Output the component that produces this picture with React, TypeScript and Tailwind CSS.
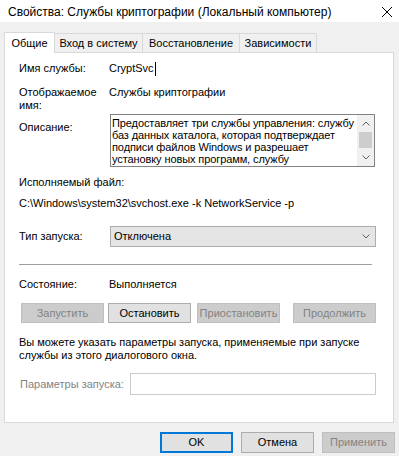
const TABS = ["Вход в систему", "Восстановление", "Зависимости"];
const TAB_W = ["w-[89px]", "w-[98px]", "w-[78px]"];

function Chevron({ up = false, className = "" }: { up?: boolean; className?: string }) {
  return (
    <svg viewBox="0 0 8 5" className={className} aria-hidden="true">
      <path
        d={up ? "M0.5 4.5L4 1L7.5 4.5" : "M0.5 0.5L4 4L7.5 0.5"}
        fill="none"
        stroke="currentColor"
        strokeWidth="1"
      />
    </svg>
  );
}

export default function App() {
  return (
    <div className="flex h-[456px] w-[399px] flex-col overflow-hidden bg-[#f0f0f0] font-['Liberation_Sans',Arial,sans-serif] text-[11px] text-black">
      {/* Заголовок окна */}
      <div className="flex h-[22px] items-center justify-between bg-white pl-[8px] pr-[7px] pt-[2px] text-[12px]">
        <span className="leading-[15px]">Свойства: Службы криптографии (Локальный компьютер)</span>
        <svg viewBox="0 0 10 10" className="h-[10px] w-[10px] text-black" aria-hidden="true">
          <path d="M0 0L10 10M10 0L0 10" stroke="currentColor" strokeWidth="1" />
        </svg>
      </div>

      {/* Вкладки */}
      <div className="mt-[10px] flex h-[20px] items-start pl-[4px]">
        <div className="relative z-10 flex h-[21px] w-[51px] items-center justify-center border border-b-0 border-[#d9d9d9] bg-white">
          Общие
        </div>
        {TABS.map((t, i) => (
          <div
            key={t}
            className={[
              "-ml-[1px] mt-[1px] flex h-[19px] items-center justify-center border border-b-0 border-[#d9d9d9] bg-[#f0f0f0]",
              TAB_W[i],
            ].join(" ")}
          >
            {t}
          </div>
        ))}
      </div>

      {/* Панель */}
      <div className="ml-[4px] flex h-[371px] w-[390px] flex-col border border-[#d9d9d9] bg-white pl-[14px]">
        <div className="mt-[8px] flex h-[15px] items-center leading-[15px]">
          <span className="w-[90px]">Имя службы:</span>
          <span>CryptSvc</span>
          <span className="ml-[1px] h-[14px] w-px bg-black" />
        </div>

        <div className="mt-[10px] flex leading-[13px]">
          <span className="w-[90px]">
            Отображаемое
            <br />
            имя:
          </span>
          <span>Службы криптографии</span>
        </div>

        <div className="mt-[2px] flex items-start">
          <span className="w-[91px] pt-[6px] leading-[15px]">Описание:</span>
          <div className="flex h-[53px] w-[265px] border border-[#828282]">
            <div className="flex-1 overflow-hidden whitespace-nowrap pl-[1px] pt-[2px] leading-[12px] tracking-[-0.1px]">
              <div>Предоставляет три службы управления: службу</div>
              <div>баз данных каталога, которая подтверждает</div>
              <div>подписи файлов Windows и разрешает</div>
              <div>установку новых программ, службу</div>
            </div>
            <div className="flex w-[17px] flex-col bg-[#f0f0f0] text-[#606060]">
              <div className="flex h-[17px] items-center justify-center">
                <Chevron up className="h-[5px] w-[8px]" />
              </div>
              <div className="mx-[2px] h-[16px] bg-[#cdcdcd]" />
              <div className="flex flex-1 items-center justify-center">
                <Chevron className="h-[5px] w-[8px]" />
              </div>
            </div>
          </div>
        </div>

        <div className="mt-[8px] leading-[15px]">Исполняемый файл:</div>
        <div className="mt-[6px] leading-[15px]">C:\Windows\system32\svchost.exe -k NetworkService -p</div>

        <div className="mt-[15px] flex h-[21px] items-center">
          <span className="w-[91px]">Тип запуска:</span>
          <div className="flex h-[21px] w-[266px] items-center justify-between border border-[#adadad] bg-[#e5e5e5] pl-[3px] pr-[5px]">
            <span>Отключена</span>
            <Chevron className="h-[5px] w-[8px] text-[#606060]" />
          </div>
        </div>

        <div className="mt-[17px] h-px w-[353px] bg-[#a0a0a0]" />

        <div className="mt-[12px] flex leading-[15px]">
          <span className="w-[90px]">Состояние:</span>
          <span>Выполняется</span>
        </div>

        <div className="mt-[11px] flex pl-[2px]">
          <button className="flex h-[20px] w-[83px] items-center justify-center border border-[#bfbfbf] bg-[#cccccc] text-[#838383]">
            Запустить
          </button>
          <button className="ml-[4px] flex h-[20px] w-[83px] items-center justify-center border border-[#adadad] bg-[#e1e1e1]">
            Остановить
          </button>
          <button className="ml-[6px] flex h-[20px] w-[83px] items-center justify-center border border-[#bfbfbf] bg-[#cccccc] text-[#838383]">
            Приостановить
          </button>
          <button className="ml-[13px] flex h-[20px] w-[83px] items-center justify-center border border-[#bfbfbf] bg-[#cccccc] text-[#838383]">
            Продолжить
          </button>
        </div>

        <div className="mt-[13px] leading-[13px]">
          Вы можете указать параметры запуска, применяемые при запуске
          <br />
          службы из этого диалогового окна.
        </div>

        <div className="mt-[11px] flex h-[22px] items-center">
          <span className="w-[111px] whitespace-nowrap pl-[1px] text-[#838383]">Параметры запуска:</span>
          <div className="h-[22px] w-[246px] border border-[#cccccc] bg-white" />
        </div>
      </div>

      {/* Кнопки диалога */}
      <div className="mt-[9px] flex pl-[160px]">
        <button className="flex h-[21px] w-[73px] items-center justify-center border-2 border-[#0078d7] bg-[#e1e1e1]">
          OK
        </button>
        <button className="ml-[8px] flex h-[21px] w-[73px] items-center justify-center border border-[#adadad] bg-[#e1e1e1]">
          Отмена
        </button>
        <button className="ml-[8px] flex h-[21px] w-[73px] items-center justify-center border border-[#bfbfbf] bg-[#cccccc] text-[#838383]">
          Применить
        </button>
      </div>
    </div>
  );
}
